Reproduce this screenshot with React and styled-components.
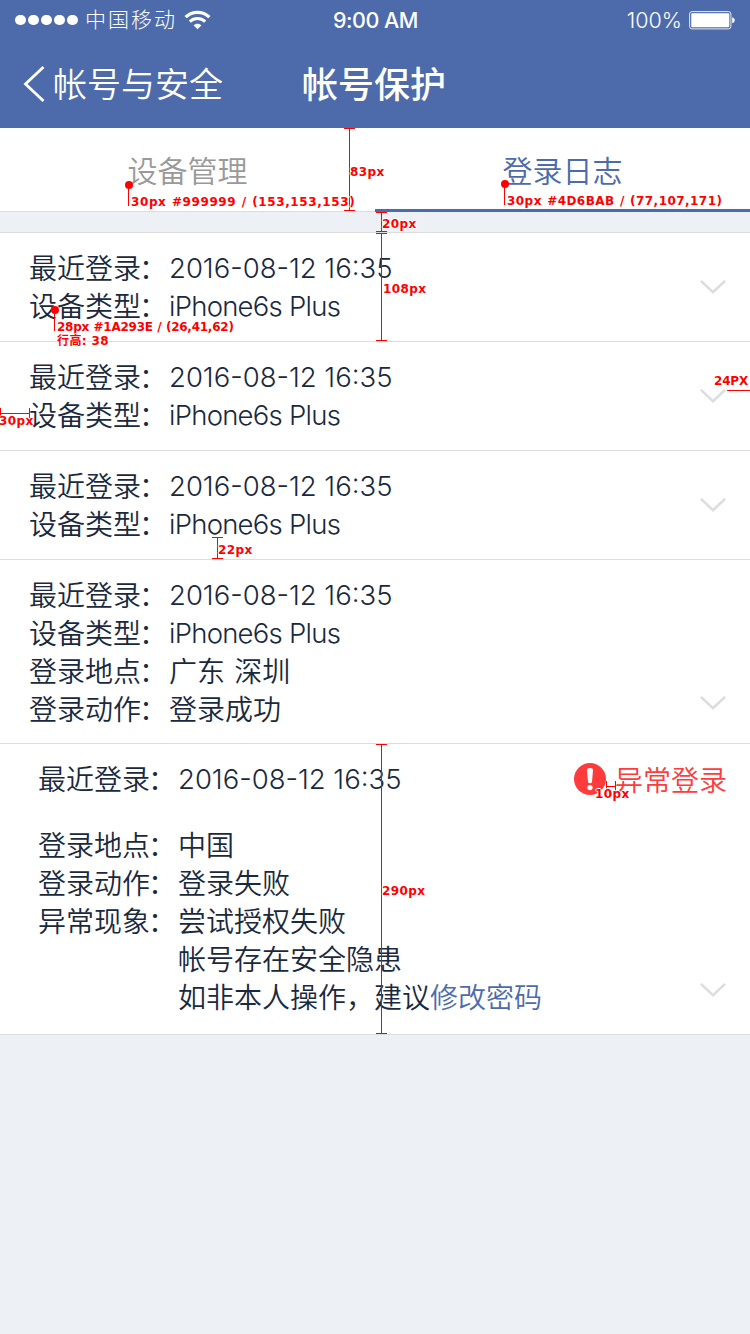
import React from 'react';
import styled, { createGlobalStyle } from 'styled-components';

const GlobalStyle = createGlobalStyle`
  * { box-sizing: border-box; }
  body { margin: 0; background: #edf0f5; }
`;

const cjk = `"Noto Sans CJK SC", sans-serif`;

const Screen = styled.main`
  position: relative;
  width: 750px;
  height: 1334px;
  overflow: hidden;
  background: #edf0f5;
  color: #1a293e;
  font-family: ${cjk};
  font-weight: 350;
  white-space: nowrap;
`;

const Header = styled.header`
  height: 128px;
  background: #4d6bab;
  color: #fff;
`;

const StatusBar = styled.div`
  display: grid;
  grid-template-columns: 1fr auto 1fr;
  align-items: center;
  height: 40px;
  padding: 0 14px 0 15px;
`;

const StatusGroup = styled.div`
  display: flex;
  align-items: center;
  justify-content: ${(p) => (p.$end ? 'flex-end' : 'flex-start')};
`;

const Signal = styled.div`
  display: flex;
  gap: 2.5px;
  margin-right: 7px;
`;

const SignalDot = styled.i`
  width: 10.6px;
  height: 10.6px;
  border-radius: 50%;
  background: #fff;
`;

const Carrier = styled.span`
  margin-right: 7px;
  font-size: 21px;
  line-height: 37px;
  height: 40px;
  letter-spacing: 2px;
  font-weight: 300;
`;

const Clock = styled.time`
  font: 500 21.5px/40px Inter, sans-serif;
  letter-spacing: -0.5px;
`;

const Percent = styled.span`
  margin-right: 7px;
  font: 300 21.5px/40px Inter, sans-serif;
`;

const NavBar = styled.nav`
  display: grid;
  grid-template-columns: 302px 1fr;
  align-items: center;
  height: 88px;
`;

const BackLink = styled.a`
  display: flex;
  align-items: center;
  gap: 7px;
  height: 88px;
  padding-left: 22px;
  font-size: 34px;
`;

const BackLabel = styled.span`
  height: 88px;
  line-height: 86px;
`;

const Title = styled.h1`
  margin: 0;
  font-size: 36px;
  font-weight: 500;
  line-height: 84px;
  height: 88px;
`;

const Tabs = styled.div`
  display: grid;
  grid-template-columns: 1fr 1fr;
  height: 84px;
  background: #fff;
  border-bottom: 1px solid #dcdcdc;
`;

const Tab = styled.button`
  height: 84px;
  padding: 0;
  border: 0;
  border-bottom: 3px solid ${(p) => (p.$active ? '#4d6bab' : 'transparent')};
  background: none;
  color: ${(p) => (p.$active ? '#4d6bab' : '#999')};
  font: 350 30px/80px ${cjk};
`;

const List = styled.section`
  margin-top: 20px;
  border-top: 1px solid #dcdcdc;
`;

const Entry = styled.article`
  display: flex;
  justify-content: space-between;
  height: ${(p) => p.$height}px;
  padding: 15px 24px 0 ${(p) => p.$indent}px;
  background: #fff;
  border-bottom: 1px solid #dcdcdc;
`;

const Fields = styled.dl`
  display: grid;
  grid-template-columns: 140px auto;
  grid-auto-rows: 38px;
  align-content: start;
  margin: 0;
  font-size: 28px;
  line-height: 38px;
  word-spacing: 3px;
`;

const FieldName = styled.dt`
  margin: 0;

  &::after {
    content: '：';
    margin-left: -2px;
  }
`;

const FieldValue = styled.dd`
  margin: 0;
`;

const Latin = styled.span`
  display: block;
  height: 38px;
  font-family: Inter, sans-serif;
  font-weight: 300;
  font-size: 27.5px;
  line-height: 41px;
  letter-spacing: ${(p) => p.$track}px;
  word-spacing: 0;
`;

const Spacer = styled.div`
  height: 28px;
`;

const PasswordLink = styled.a`
  color: #4d6bab;
`;

const Aside = styled.div`
  display: flex;
  flex-direction: column;
  justify-content: space-between;
  align-items: flex-end;
  padding-bottom: ${(p) => p.$bottom}px;
`;

const Alert = styled.div`
  display: flex;
  align-items: center;
  gap: 9px;
  height: 38px;
  margin: 1px -1px 0 0;
  color: #ff3b3b;
  font-size: 28px;
  line-height: 38px;
`;

const Chevron = styled.svg`
  display: block;
  width: 26px;
  height: 14px;
`;

/* Redline layer: measurements and colour notes laid over the screen */
const Redlines = styled.div`
  position: absolute;
  inset: 0;
  color: #f00;
`;

const Note = styled.span`
  position: absolute;
  left: ${(p) => p.$x}px;
  top: ${(p) => p.$y - 8}px;
  font: 700 12px/16px "DejaVu Sans", "Noto Sans CJK SC", sans-serif;
  letter-spacing: ${(p) => p.$track ?? 0.4}px;
  word-spacing: ${(p) => p.$word || 0}px;
  text-shadow: 1px 0 #fff, -1px 0 #fff, 0 1px #fff, 0 -1px #fff;
`;

const VerticalMeasure = styled.i`
  position: absolute;
  left: ${(p) => p.$x - 5}px;
  top: ${(p) => p.$y}px;
  width: 11px;
  height: ${(p) => p.$length}px;
  border: solid #f00;
  border-width: 1px 0;
  background: linear-gradient(#f00, #f00) center / 1px 100% no-repeat;
`;

const HorizontalMeasure = styled.i`
  position: absolute;
  left: ${(p) => p.$x}px;
  top: ${(p) => p.$y - 5}px;
  width: ${(p) => p.$length}px;
  height: ${(p) => (p.$open ? 11 : 10)}px;
  border: solid #f00;
  border-width: 0 ${(p) => (p.$open ? 0 : 1)}px;
  background: linear-gradient(#f00, #f00) 0 5px / 100% 1px no-repeat;
`;

const Pin = styled.i`
  position: absolute;
  left: ${(p) => p.$x - 4}px;
  top: ${(p) => p.$y - 4}px;
  width: 8px;
  height: 8px;
  border-radius: 50%;
  background: #f00;

  &::after {
    content: '';
    position: absolute;
    left: 3px;
    top: 4px;
    width: 1px;
    height: 21px;
    background: #f00;
  }
`;

const WifiIcon = () => (
  <svg width="27" height="20" viewBox="0 0 27 20" fill="none" stroke="#fff">
    <path d="M1.6 7.2C8.4 .7 18.6 .7 25.4 7.2" strokeWidth="3.2" />
    <path d="M5.8 11.6C10.2 7.5 16.8 7.5 21.2 11.6" strokeWidth="3" />
    <path d="M13.5 19.2L9.5 15.2C11.8 13.1 15.2 13.1 17.5 15.2Z" fill="#fff" stroke="none" />
  </svg>
);

const BatteryIcon = () => (
  <svg width="47" height="19" viewBox="0 0 47 19">
    <rect x=".6" y=".6" width="41.3" height="17.3" rx="2.4" fill="none" stroke="#fff" strokeOpacity=".85" strokeWidth="1" />
    <rect x="2.3" y="2.3" width="38" height="14" rx=".8" fill="#fff" />
    <path d="M43.2 6.3C46.6 7.3 46.6 11.3 43.2 12.3Z" fill="#fff" />
  </svg>
);

const BackIcon = () => (
  <svg width="24" height="38" viewBox="0 0 24 38" fill="none" stroke="#fff" strokeWidth="2.8">
    <path d="M21.5 2L3.5 19L21.5 36" />
  </svg>
);

const AlertIcon = () => (
  <svg width="32" height="32" viewBox="0 0 32 32">
    <circle cx="16" cy="16" r="16" fill="#ff3b3b" />
    <path d="M13 7.2Q13 5 16 5T19 7.2L18 18.8Q17.8 20.3 16 20.3T14 18.8Z" fill="#fff" />
    <circle cx="16" cy="24.6" r="2.6" fill="#fff" />
  </svg>
);

const ExpandIcon = () => (
  <Chevron viewBox="0 0 26 14" fill="none" stroke="#ddd" strokeWidth="2.6">
    <path d="M.9 .9L13 12.2L25.1 .9" />
  </Chevron>
);

const DateValue = () => <Latin $track={0}>2016-08-12 16:35</Latin>;

const LoginEntry = ({ place, action }) => (
  <Entry $height={place ? 184 : 109} $indent={29}>
    <Fields>
      <FieldName>最近登录</FieldName>
      <FieldValue><DateValue /></FieldValue>
      <FieldName>设备类型</FieldName>
      <FieldValue><Latin $track={-0.75}>iPhone6s Plus</Latin></FieldValue>
      {place && (
        <>
          <FieldName>登录地点</FieldName>
          <FieldValue>{place}</FieldValue>
          <FieldName>登录动作</FieldName>
          <FieldValue>{action}</FieldValue>
        </>
      )}
    </Fields>
    <Aside $bottom={place ? 33 : 47}>
      <span />
      <ExpandIcon />
    </Aside>
  </Entry>
);

const FailedEntry = () => (
  <Entry $height={291} $indent={38}>
    <div>
      <Fields>
        <FieldName>最近登录</FieldName>
        <FieldValue><DateValue /></FieldValue>
      </Fields>
      <Spacer />
      <Fields>
        <FieldName>登录地点</FieldName>
        <FieldValue>中国</FieldValue>
        <FieldName>登录动作</FieldName>
        <FieldValue>登录失败</FieldValue>
        <FieldName>异常现象</FieldName>
        <FieldValue>
          尝试授权失败<br />
          帐号存在安全隐患<br />
          如非本人操作，建议<PasswordLink>修改密码</PasswordLink>
        </FieldValue>
      </Fields>
    </div>
    <Aside $bottom={37}>
      <Alert><AlertIcon />异常登录</Alert>
      <ExpandIcon />
    </Aside>
  </Entry>
);

export default function App() {
  return (
    <Screen>
      <GlobalStyle />
      <Header>
        <StatusBar>
          <StatusGroup>
            <Signal>{[0, 1, 2, 3, 4].map((n) => <SignalDot key={n} />)}</Signal>
            <Carrier>中国移动</Carrier>
            <WifiIcon />
          </StatusGroup>
          <Clock>9:00 AM</Clock>
          <StatusGroup $end>
            <Percent>100%</Percent>
            <BatteryIcon />
          </StatusGroup>
        </StatusBar>
        <NavBar>
          <BackLink><BackIcon /><BackLabel>帐号与安全</BackLabel></BackLink>
          <Title>帐号保护</Title>
        </NavBar>
      </Header>
      <Tabs>
        <Tab>设备管理</Tab>
        <Tab $active>登录日志</Tab>
      </Tabs>
      <List>
        <LoginEntry />
        <LoginEntry />
        <LoginEntry />
        <LoginEntry place="广东 深圳" action="登录成功" />
        <FailedEntry />
      </List>
      <Redlines>
        <VerticalMeasure $x={349} $y={128} $length={83} />
        <Note $x={350} $y={172}>83px</Note>
        <Pin $x={129} $y={185} />
        <Note $x={131} $y={202} $track={0.6} $word={0.7}>30px #999999 / (153,153,153)</Note>
        <Pin $x={505} $y={184} />
        <Note $x={507} $y={201} $track={0.45} $word={0.7}>30px #4D6BAB / (77,107,171)</Note>
        <VerticalMeasure $x={381} $y={212} $length={20} />
        <Note $x={382} $y={224}>20px</Note>
        <VerticalMeasure $x={381} $y={233} $length={108} />
        <Note $x={383} $y={289}>108px</Note>
        <Pin $x={55} $y={310} />
        <Note $x={57} $y={327} $track={-0.25} $word={0.6}>28px #1A293E / (26,41,62)</Note>
        <Note $x={57} $y={341}>行高: 38</Note>
        <HorizontalMeasure $x={0} $y={413} $length={30} />
        <Note $x={-1} $y={421}>30px</Note>
        <HorizontalMeasure $x={727} $y={390} $length={23} $open />
        <Note $x={714} $y={381} $track={-0.2}>24PX</Note>
        <VerticalMeasure $x={217} $y={537} $length={22} />
        <Note $x={218} $y={550}>22px</Note>
        <HorizontalMeasure $x={606} $y={786} $length={10} />
        <Note $x={595} $y={794}>10px</Note>
        <VerticalMeasure $x={381} $y={744} $length={290} />
        <Note $x={382} $y={891}>290px</Note>
      </Redlines>
    </Screen>
  );
}
